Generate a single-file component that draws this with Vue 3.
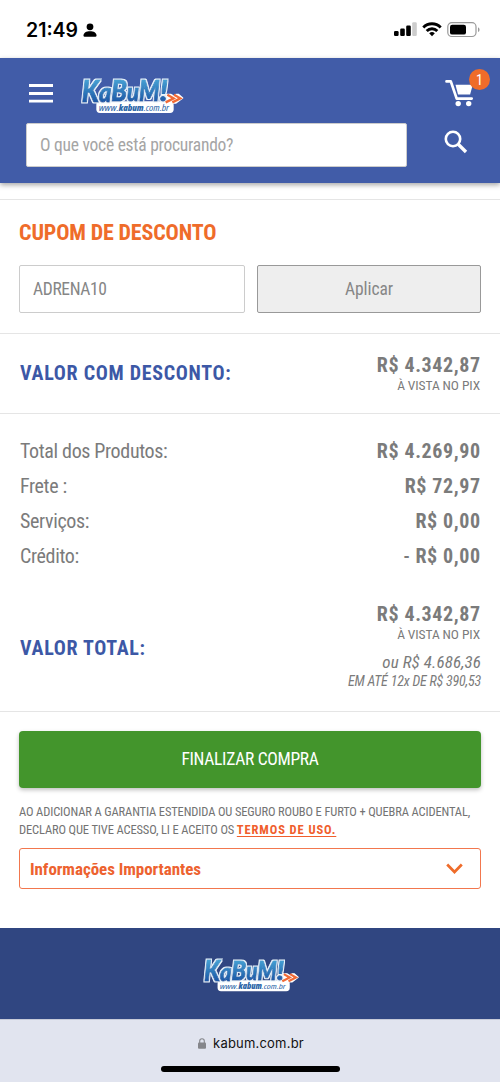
<script setup>
import { h } from 'vue'

const rows = [
  { label: 'Total dos Produtos:', sign: '', value: 'R$ 4.269,90' },
  { label: 'Frete :', sign: '', value: 'R$ 72,97' },
  { label: 'Serviços:', sign: '', value: 'R$ 0,00' },
  { label: 'Crédito:', sign: '- ', value: 'R$ 0,00' },
]

const letters = [
  { c: 'K', x: 35, y: 103, size: 92, w: 52 },
  { c: 'a', x: 87, y: 101, size: 82, w: 37 },
  { c: 'B', x: 124, y: 98, size: 84, w: 47 },
  { c: 'u', x: 171, y: 98, size: 76, w: 36 },
  { c: 'M', x: 207, y: 98, size: 84, w: 62 },
  { c: '!', x: 269, y: 99, size: 87, w: 24 },
]

const address = [
  { t: 'www.', x: 86, w: 60, weight: 500 },
  { t: 'kabum', x: 146, w: 75, weight: 800 },
  { t: '.com.br', x: 221, w: 76, weight: 500 },
]

const stretched = { lengthAdjust: 'spacingAndGlyphs' }

const Logo = () =>
  h('svg', { viewBox: '0 0 360 156', 'aria-label': 'KaBuM!' }, [
    h('defs', [
      h('linearGradient', { id: 'ink', gradientUnits: 'userSpaceOnUse', x1: 0, y1: 36, x2: 0, y2: 102 }, [
        h('stop', { offset: '0', 'stop-color': '#45a0d3' }),
        h('stop', { offset: '1', 'stop-color': '#1b58a6' }),
      ]),
      h('filter', { id: 'outline', filterUnits: 'userSpaceOnUse', x: 0, y: 0, width: 360, height: 156 }, [
        h('feMorphology', { in: 'SourceAlpha', operator: 'dilate', radius: 4, result: 'fat' }),
        h('feFlood', { 'flood-color': '#e8f4fb' }),
        h('feComposite', { in2: 'fat', operator: 'in', result: 'edge' }),
        h('feMerge', [h('feMergeNode', { in: 'edge' }), h('feMergeNode', { in: 'SourceGraphic' })]),
      ]),
    ]),
    h('rect', { x: 79, y: 100, width: 232, height: 35, rx: 11, fill: '#fff' }),
    h('path', { d: 'M288 79h14l12 7 4-7h7l13 11-20 15h-32z', fill: '#fff', stroke: '#fff', 'stroke-width': 4, 'stroke-linejoin': 'round' }),
    h('g', { filter: 'url(#outline)', fill: 'url(#ink)', stroke: 'url(#ink)', 'stroke-width': 3, 'font-family': 'Lato, sans-serif', 'font-weight': 900, 'font-style': 'italic' },
      letters.map((l) => h('text', { x: l.x, y: l.y, 'font-size': l.size, textLength: l.w, ...stretched }, l.c))),
    h('path', { d: 'M292 80l19 11-24 12M312 80l19 11-24 12', fill: 'none', stroke: '#f16a35', 'stroke-width': 7 }),
    h('g', { 'font-family': 'Open Sans, sans-serif', 'font-style': 'italic', 'font-size': 25, fill: '#2c66a8' },
      address.map((a) => h('text', { x: a.x, y: 128, 'font-weight': a.weight, textLength: a.w, ...stretched }, a.t))),
  ])
</script>

<template>
  <div class="page">
    <div class="status">
      <span class="clock">21:49</span>
      <svg class="person" width="14" height="15" viewBox="0 0 14 15"><circle cx="7" cy="3.800" r="3.400" /><path d="M.5 12.500C.5 9.700 3.300 8.200 7 8.200s6.500 1.500 6.500 4.300q0 1.200-1.200 1.200H1.700Q.5 13.700.5 12.500z" /></svg>
      <svg class="system" width="86" height="16" viewBox="0 0 86 16">
        <rect x="0" y="9" width="4.600" height="5" rx="1.200" /><rect x="6.200" y="6.500" width="4.600" height="7.500" rx="1.200" /><rect x="12.200" y="3.500" width="4.600" height="10.500" rx="1.200" /><rect x="18.200" y="0.300" width="4.600" height="13.700" rx="1.200" fill="#ccc" />
        <g fill="none" stroke="#000" stroke-width="2.900"><path d="M29.300 5.400a12.300 12.300 0 0 1 17.400 0" /><path d="M32.700 9a7.400 7.400 0 0 1 10.600 0" /></g><path d="M35.200 11.300a4 4 0 0 1 5.600 0L38 14.200z" />
        <rect x="53.800" y=".7" width="28.200" height="13.800" rx="4" fill="none" stroke="#999" stroke-width="1.200" /><rect x="56" y="2.700" width="16" height="9.900" rx="2.200" /><path d="M84 5.300q1.600.8 1.600 2.400t-1.600 2.400z" fill="#999" />
      </svg>
    </div>

    <header class="header">
      <div class="top">
        <svg class="menu" width="24" height="19" viewBox="0 0 24 19"><path d="M0 1.500h24M0 9.500h24M0 17.200h24" stroke="#fff" stroke-width="2.800" /></svg>
        <Logo class="logo" />
        <div class="cart">
          <svg width="29" height="28" viewBox="0 0 29 28" fill="#fff"><path d="M1.500 2.400h4.300l5.900 17.200h15" fill="none" stroke="#fff" stroke-width="2.700" stroke-linecap="round" stroke-linejoin="round" /><path d="M10.500 5.800h17.300l-2.700 9.800H13z" /><circle cx="13.200" cy="24.600" r="2.700" /><circle cx="23.700" cy="24.600" r="2.700" /></svg>
          <span class="badge">1</span>
        </div>
      </div>
      <div class="search">
        <div class="field">O que você está procurando?</div>
        <svg width="24" height="24" viewBox="0 0 24 24" fill="none" stroke="#fff"><circle cx="9" cy="9" r="7.200" stroke-width="2.600" /><path d="M14 14l8 8" stroke-width="3.300" /></svg>
      </div>
    </header>

    <main>
      <section class="coupon">
        <h2>CUPOM DE DESCONTO</h2>
        <div class="form">
          <div class="code">ADRENA10</div>
          <button class="apply">Aplicar</button>
        </div>
      </section>

      <section class="discount">
        <h3>VALOR COM DESCONTO:</h3>
        <div class="amount">
          <b>R$ 4.342,87</b>
          <small>À VISTA NO PIX</small>
        </div>
      </section>

      <section class="summary">
        <div v-for="r in rows" :key="r.label" class="row">
          <span class="label">{{ r.label }}</span>
          <span class="value"><i v-if="r.sign">{{ r.sign }}</i><b>{{ r.value }}</b></span>
        </div>
        <div class="total">
          <h3>VALOR TOTAL:</h3>
          <div class="amount">
            <b>R$ 4.342,87</b>
            <small>À VISTA NO PIX</small>
            <em class="or">ou R$ 4.686,36</em>
            <em class="parts">EM ATÉ 12x DE R$ 390,53</em>
          </div>
        </div>
      </section>

      <section class="checkout">
        <button class="buy">FINALIZAR COMPRA</button>
        <p><span class="terms">AO ADICIONAR A GARANTIA ESTENDIDA OU SEGURO ROUBO E FURTO + QUEBRA ACIDENTAL,</span><br><span class="terms">DECLARO QUE TIVE ACESSO, LI E ACEITO OS </span><a>TERMOS DE USO.</a></p>
        <div class="info">
          <span>Informações Importantes</span>
          <svg width="17" height="12" viewBox="0 0 17 12"><path d="M1.200 1.500l7.300 7.500 7.300-7.500" fill="none" stroke="#ef6c2a" stroke-width="2.700" /></svg>
        </div>
      </section>
    </main>

    <footer class="footer"><Logo class="logo small" /></footer>

    <div class="browser">
      <div class="address">
        <svg width="8" height="11" viewBox="0 0 8 11"><rect y="4.600" width="8" height="6.200" rx="1" fill="#85868b" /><path d="M1.700 5V3a2.300 2.300 0 0 1 4.600 0v2" fill="none" stroke="#85868b" stroke-width="1.100" /></svg>
        <span>kabum.com.br</span>
      </div>
      <div class="home"></div>
    </div>
  </div>
</template>

<style>
body { background: #fff; }
</style>

<style scoped>
* { box-sizing: border-box; margin: 0; }
.page { width: 500px; height: 1082px; overflow: hidden; background: #fff; color: #7b7b7b; font-family: "Roboto Condensed", Roboto, sans-serif; font-stretch: 75%; display: flex; flex-direction: column; white-space: nowrap; }
.status { height: 58px; flex: none; display: flex; align-items: center; padding: 2px 20px 0 26px; color: #000; font-family: Inter, sans-serif; font-stretch: normal; }
.clock { font-size: 19.500px; font-weight: 600; width: 57px; }
.system { margin-left: auto; }
.header { height: 125px; flex: none; background: #415ca8; box-shadow: 0 2px 5px rgba(0,0,0,.35); position: relative; }
.top { height: 65px; display: flex; align-items: flex-start; padding-left: 29px; }
.menu { margin-top: 26px; margin-right: 17px; }
.logo { width: 120px; height: 52px; margin-top: 10px; }
.cart { margin: 21px 26px 0 auto; position: relative; width: 29px; height: 28px; }
.badge { position: absolute; left: 24px; top: -10px; width: 21px; height: 21px; border-radius: 50%; background: #ef6c2a; color: #fff; font-size: 14px; line-height: 22px; text-align: center; }
.search { display: flex; align-items: center; justify-content: space-between; padding: 0 32px 0 26px; }
.search svg { margin-top: -6px; }
.field { width: 381px; height: 44px; border: 1px solid #ccc; border-radius: 2px; background: #fff; color: #a5a5a5; font-size: 17.500px; line-height: 42px; padding-left: 13px; letter-spacing: -.25px; }
main { height: 745px; flex: none; padding-top: 16px; }
section { border-top: 1.500px solid #e5e5e5; padding: 0 20px; }
.coupon { height: 134px; padding-left: 19px; padding-right: 19px; }
h2 { font-size: 22px; line-height: 26px; color: #ef6c2a; padding-top: 20px; height: 65px; font-weight: 700; letter-spacing: -.15px; }
.form { display: flex; gap: 12px; }
.code, .apply { height: 48px; border: 1px solid #ccc; border-radius: 2px; font: inherit; font-size: 17.500px; line-height: 46px; color: #868686; }
.code { width: 226px; flex: none; padding-left: 13px; letter-spacing: -.35px; }
.apply { width: 224px; flex: none; background: #eee; border-color: #999; padding: 0; letter-spacing: -.05px; }
.discount { height: 80px; display: flex; align-items: center; justify-content: space-between; }
.discount h3 { margin-top: -1px; }
.discount .amount { margin-top: -2px; }
h3 { color: #3c58a6; font-size: 20px; line-height: 24px; font-weight: 700; letter-spacing: .7px; }
.amount { display: flex; flex-direction: column; align-items: flex-end; }
b { font-size: 20px; line-height: 24px; font-weight: 700; letter-spacing: .6px; margin-right: -.6px; }
small { font-size: 13.500px; line-height: 16px; letter-spacing: -.1px; }
.summary { height: 298px; padding-top: 19px; }
.row { display: flex; justify-content: space-between; height: 35px; align-items: center; font-size: 20px; }
.label { letter-spacing: -.35px; }
.row i { font-style: normal; font-weight: 500; white-space: pre; letter-spacing: .6px; }
.total { height: 88px; margin-top: 28.500px; display: flex; justify-content: space-between; }
.total h3 { padding-top: 34px; }
.or { font-size: 17px; line-height: 20px; margin: 10.500px -1px 0 0; letter-spacing: .1px; }
.parts { font-size: 14px; line-height: 18px; letter-spacing: -.2px; margin-right: -1px; }
.checkout { padding-left: 19px; padding-top: 19px; }
.buy { display: block; width: 462px; height: 57px; border: 0; border-radius: 4px; background: #43952c; color: #fff; font: inherit; font-size: 17.500px; letter-spacing: -.3px; padding: 0 0 2px; box-shadow: 0 2px 4px rgba(0,0,0,.25); }
p { font-size: 12.500px; line-height: 18px; padding-top: 15px; color: #737373; }
.terms { letter-spacing: -.14px; white-space: pre; }
a { color: #f05e2d; font-weight: 700; letter-spacing: .9px; text-decoration: underline; text-underline-offset: 2px; }
.info { width: 462px; height: 41px; margin-top: 9px; border: 1.500px solid #f2774e; border-radius: 3px; display: flex; align-items: center; justify-content: space-between; padding: 0 17px 0 10px; color: #ed622f; font-size: 17px; font-weight: 700; letter-spacing: -.05px; }
.footer { height: 91px; flex: none; background: #304681; display: flex; }
.logo.small { width: 112px; height: 49px; margin: 21px 0 0 193px; }
.browser { height: 63px; flex: none; background: #e1e4ef; border-top: 1px solid #c6cad8; display: flex; flex-direction: column; align-items: center; font-family: Inter, sans-serif; font-stretch: normal; color: #111; }
.address { height: 46px; display: flex; align-items: center; gap: 7px; font-size: 13px; letter-spacing: .2px; padding-left: 2px; }
.home { width: 179px; height: 6px; border-radius: 3px; background: #000; }
</style>
